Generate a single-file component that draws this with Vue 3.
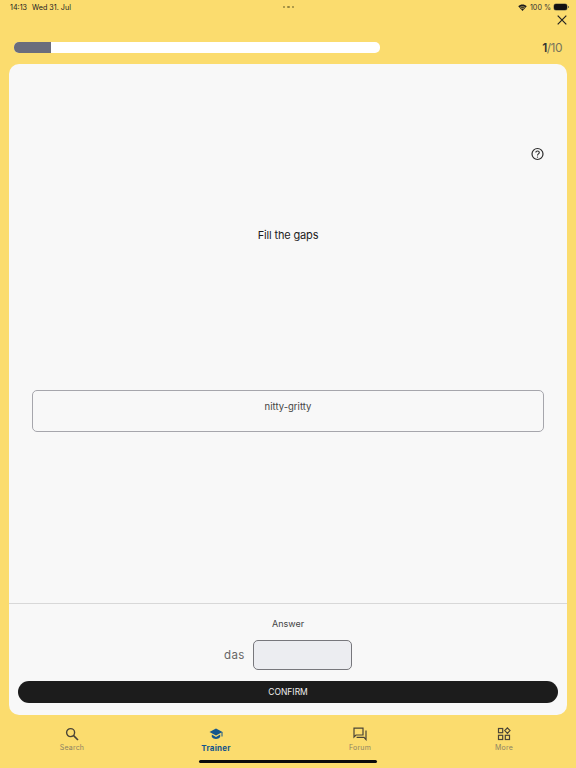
<script setup>
const tabs = [
  { label: 'Search', icon: 'search' },
  { label: 'Trainer', icon: 'trainer', active: true },
  { label: 'Forum', icon: 'forum' },
  { label: 'More', icon: 'more' }
]
</script>

<template>
  <div class="page">
    <div class="status-bar">
      <div class="status-left">
        <span>14:13</span>
        <span>Wed 31. Jul</span>
      </div>
      <div class="dots"><i></i><i></i><i></i></div>
      <div class="status-right">
        <svg width="9" height="7" viewBox="0 0 18 14">
          <path d="M9 14 L0.5 4.5 C5 0 13 0 17.5 4.5 Z" fill="#1c1c1c" />
          <path d="M3.7 7 C6.5 4.9 11.5 4.9 14.3 7" fill="none" stroke="#fbdc6e" stroke-width="1.3" />
          <path d="M6 9.8 C7.7 8.6 10.3 8.6 12 9.8" fill="none" stroke="#fbdc6e" stroke-width="1.3" />
        </svg>
        <span>100 %</span>
        <div class="battery"></div>
      </div>
    </div>

    <div class="close-row">
      <svg width="10" height="10" viewBox="0 0 10 10">
        <path d="M0.7 0.7 L9.3 9.3 M9.3 0.7 L0.7 9.3" stroke="#222" stroke-width="1.2" fill="none" />
      </svg>
    </div>

    <div class="progress-row">
      <div class="progress">
        <div class="progress-fill"></div>
      </div>
      <div class="count"><b>1</b>/10</div>
    </div>

    <main class="card">
      <div class="question">
        <div class="help-row">
          <svg width="14" height="14" viewBox="0 0 14 14">
            <circle cx="7.5" cy="7" r="5.5" fill="none" stroke="#2a2a2a" stroke-width="1.2" />
            <path d="M5.8 5.6 C5.8 3.4 9.3 3.5 9.3 5.5 C9.3 6.9 7.5 7 7.5 8.4" fill="none" stroke="#2a2a2a" stroke-width="1.1" />
            <circle cx="7.5" cy="10.1" r="0.7" fill="#2a2a2a" />
          </svg>
        </div>
        <h1 class="title">Fill the gaps</h1>
        <div class="term-box">nitty-gritty</div>
      </div>
      <div class="answer">
        <div class="answer-label">Answer</div>
        <div class="answer-row">
          <span class="article">das</span>
          <div class="gap"></div>
        </div>
        <button class="confirm">CONFIRM</button>
      </div>
    </main>

    <nav class="tabbar">
      <div v-for="tab in tabs" :key="tab.label" class="tab" :class="{ active: tab.active }">
        <svg v-if="tab.icon === 'search'" width="14" height="14" viewBox="0 0 14 14">
          <circle cx="5.6" cy="5.6" r="4" fill="none" stroke="#4a4436" stroke-width="1.4" />
          <path d="M8.6 8.6 L13 13" stroke="#4a4436" stroke-width="1.6" fill="none" />
        </svg>
        <svg v-else-if="tab.icon === 'trainer'" width="14" height="14" viewBox="0 0 14 14">
          <path d="M7 1.5 L0.5 5 L7 8.5 L13.5 5 Z" fill="#15568c" />
          <path d="M2.8 7.6 V10 C4.5 12.6 9.5 12.6 11.2 10 V7.6 L7 9.9 Z" fill="#15568c" />
          <path d="M13 5 V9.5" stroke="#15568c" stroke-width="1" fill="none" />
        </svg>
        <svg v-else-if="tab.icon === 'forum'" width="14" height="14" viewBox="0 0 14 14">
          <path d="M1 1.2 H10 V8 H3 L1 10 Z" fill="none" stroke="#4a4436" stroke-width="1.2" />
          <path d="M3.6 10.4 H11 L13 12.6 V3.6" fill="none" stroke="#4a4436" stroke-width="1.2" />
        </svg>
        <svg v-else width="14" height="14" viewBox="0 0 14 14">
          <rect x="1.5" y="1.5" width="4.2" height="4.2" fill="none" stroke="#4a4436" stroke-width="1.2" />
          <rect x="1.5" y="8.3" width="4.2" height="4.2" fill="none" stroke="#4a4436" stroke-width="1.2" />
          <rect x="8.3" y="8.3" width="4.2" height="4.2" fill="none" stroke="#4a4436" stroke-width="1.2" />
          <path d="M10.4 0.9 L13 3.6 L10.4 6.3 L7.8 3.6 Z" fill="none" stroke="#4a4436" stroke-width="1.2" />
        </svg>
        <span>{{ tab.label }}</span>
      </div>
    </nav>

    <div class="home-indicator"></div>
  </div>
</template>

<style scoped>
.page {
  position: relative;
  width: 576px;
  height: 768px;
  display: flex;
  flex-direction: column;
  background: #fbdc6e;
  font-family: Inter, "Liberation Sans", sans-serif;
  overflow: hidden;
}

.status-bar {
  height: 13px;
  display: grid;
  grid-template-columns: 1fr auto 1fr;
  align-items: center;
  padding: 1px 9px 0 10px;
  box-sizing: border-box;
  font-size: 7.2px;
  color: #222;
}

.status-left {
  display: flex;
  gap: 5px;
}

.dots {
  display: flex;
  gap: 2px;
}

.dots i {
  width: 2.5px;
  height: 2.5px;
  border-radius: 50%;
  background: #97873f;
}

.status-right {
  display: flex;
  justify-content: flex-end;
  align-items: center;
  gap: 3px;
  color: #333;
}

.battery {
  position: relative;
  width: 13px;
  height: 6px;
  background: #111;
  border-radius: 2px;
  box-shadow: 0 0 0 0.5px #7d7650;
}

.battery::after {
  content: "";
  position: absolute;
  left: 13.5px;
  top: 2px;
  width: 1px;
  height: 2px;
  background: #7d7650;
}

.close-row {
  height: 14px;
  display: flex;
  justify-content: flex-end;
  align-items: center;
  padding-right: 9px;
}

.progress-row {
  height: 37px;
  box-sizing: border-box;
  padding: 4px 14px 0;
  display: flex;
  align-items: center;
  justify-content: space-between;
}

.progress {
  width: 366px;
  height: 11px;
  background: #fff;
  border-radius: 5px;
  overflow: hidden;
}

.progress-fill {
  width: 37px;
  height: 100%;
  background: #6b6d7c;
}

.count {
  font-size: 12px;
  letter-spacing: -0.5px;
  color: #77745c;
}

.count b {
  font-weight: 600;
  color: #333;
}

.card {
  margin: 0 9px;
  height: 651px;
  display: flex;
  flex-direction: column;
  background: #f8f8f8;
  border-radius: 10px;
}

.question {
  height: 540px;
  box-sizing: border-box;
  padding: 83px 23px 0;
  border-bottom: 1px solid #d8d8d8;
}

.help-row {
  height: 14px;
  display: flex;
  justify-content: flex-end;
}

.title {
  margin: 66px 0 0;
  font-size: 11px;
  line-height: 16px;
  font-weight: 400;
  letter-spacing: -0.15px;
  text-align: center;
  color: #1c1c1c;
}

.term-box {
  margin-top: 147px;
  height: 42px;
  box-sizing: border-box;
  padding-top: 10px;
  border: 1px solid #a6a6ac;
  border-radius: 5px;
  font-size: 9.5px;
  line-height: 12px;
  text-align: center;
  color: #444;
}

.answer {
  flex: 1;
  display: flex;
  flex-direction: column;
  align-items: center;
  padding: 14px 9px 0;
}

.answer-label {
  font-size: 9px;
  line-height: 12px;
  color: #444;
}

.answer-row {
  margin-top: 10px;
  display: flex;
  align-items: center;
  gap: 9px;
}

.article {
  width: 20px;
  font-size: 11.5px;
  letter-spacing: 0.4px;
  color: #666;
}

.gap {
  width: 99px;
  height: 30px;
  box-sizing: border-box;
  background: #ecedf1;
  border: 1px solid #77777c;
  border-radius: 5px;
}

.confirm {
  margin-top: 11px;
  width: 100%;
  height: 22px;
  padding: 0;
  border: none;
  border-radius: 11px;
  background: #1c1c1c;
  color: #eee;
  font-family: inherit;
  font-size: 8.5px;
}

.tabbar {
  flex: 1;
  display: grid;
  grid-template-columns: repeat(4, 144px);
  padding-top: 12px;
}

.tab {
  display: flex;
  flex-direction: column;
  align-items: center;
  gap: 2px;
  font-size: 7px;
  line-height: 10px;
  letter-spacing: 0.2px;
  color: #8d8364;
}

.tab.active {
  font-size: 8px;
  font-weight: 700;
  color: #15568c;
}

.home-indicator {
  position: absolute;
  left: 199px;
  bottom: 5px;
  width: 178px;
  height: 3px;
  border-radius: 2px;
  background: #0a0a0a;
}
</style>
